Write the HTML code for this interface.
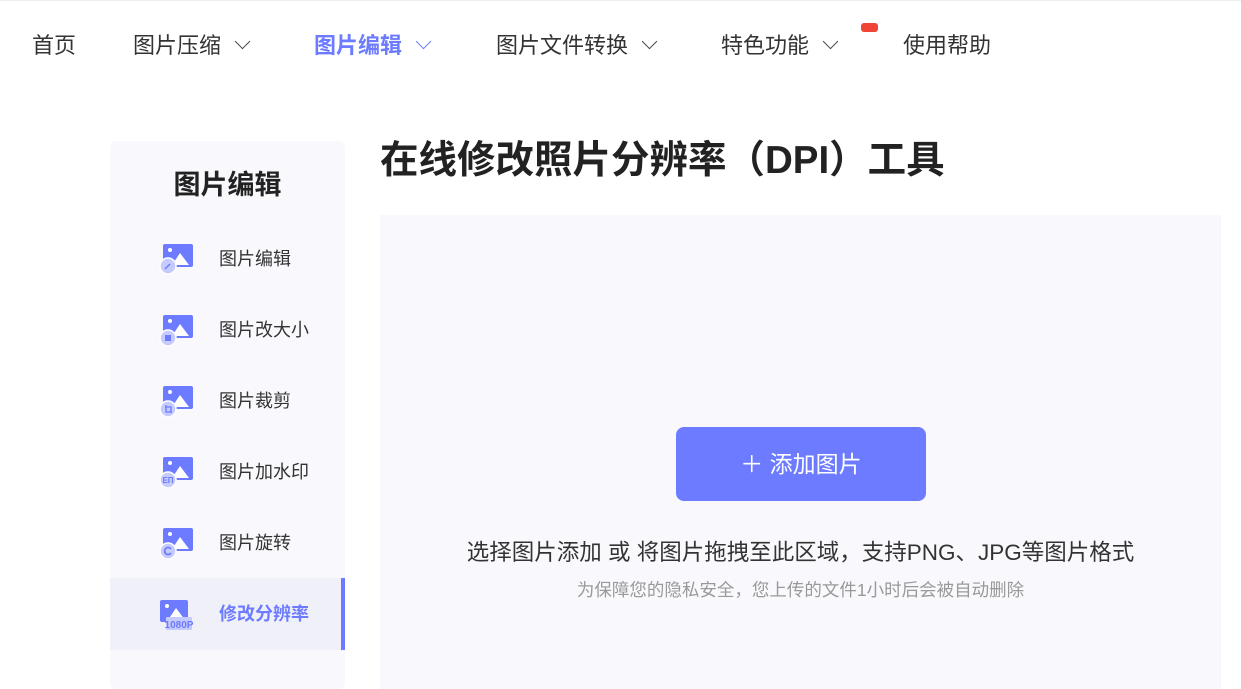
<!DOCTYPE html>
<html><head><meta charset="utf-8"><style>
*{margin:0;padding:0;box-sizing:border-box}
body{width:1241px;height:688px;overflow:hidden;background:#fff;font-family:"Liberation Sans","Noto Sans CJK SC",sans-serif;color:#333;position:relative;border-top:1px solid #eee}
.nav{position:absolute;top:30px;font-size:22px;color:#333;line-height:30px}
.nav .ch{display:inline-block;width:11px;height:11px;border-right:1.5px solid #444;border-bottom:1.5px solid #444;transform:rotate(45deg);margin-left:16px;position:relative;top:-6px}
.act{color:#6c7bff;font-weight:bold}.act .ch{border-color:#6c7bff}
.side{position:absolute;left:110px;top:140px;width:235px;height:548px;background:#f9f9fd;border-radius:6px}
.side h2{position:absolute;top:22px;width:100%;text-align:center;font-size:27px;font-weight:bold;color:#222}
.item{position:absolute;left:0;width:235px;height:72px}
.item span{position:absolute;left:109px;top:22px;font-size:18px;color:#333}
.item svg{position:absolute;left:48px;top:16px}
.item.on{background:#f0f1f8;border-right:4px solid #6c7bff}
.item.on span{color:#6c7bff;font-weight:bold}
.main{position:absolute;left:380px;top:214px;width:841px;height:474px;background:#f9f9fd}
h1{position:absolute;left:380px;top:128px;font-size:38.5px;font-weight:bold;color:#222}
.btn{position:absolute;left:296px;top:212px;width:250px;height:74px;background:#6c7bff;border-radius:8px;color:#fff;font-size:23px;text-align:center;line-height:74px}
.t1{position:absolute;left:0;width:100%;top:320px;text-align:center;font-size:22.5px;color:#333;white-space:nowrap}
.t2{position:absolute;left:0;width:100%;top:362px;text-align:center;font-size:17.5px;color:#999;white-space:nowrap}
</style></head><body>
<div class="nav" style="left:32px">首页</div>
<div class="nav" style="left:133px">图片压缩<i class="ch"></i></div>
<div class="nav act" style="left:314px">图片编辑<i class="ch"></i></div>
<div class="nav" style="left:496px">图片文件转换<i class="ch"></i></div>
<div class="nav" style="left:721px">特色功能<i class="ch"></i></div>
<div style="position:absolute;left:861px;top:22px;width:17px;height:9px;background:#f04438;border-radius:3px"></div>
<div class="nav" style="left:903px">使用帮助</div>
<h1>在线修改照片分辨率（DPI）工具</h1>
<div class="side"><h2>图片编辑</h2>
<div class="item" style="top:82px"><svg width="40" height="40"><rect x="5" y="5" width="30" height="23" rx="2" fill="#6c7bff"/><path d="M14 26l8-12 9 12z" fill="#fff"/><circle cx="12" cy="11" r="2" fill="#fff"/><circle cx="10" cy="27" r="8" fill="#c5cbff" stroke="#fff" stroke-width="1.5"/><path d="M7 30l5-5" stroke="#6c7bff" stroke-width="1.5"/></svg><span>图片编辑</span></div>
<div class="item" style="top:153px"><svg width="40" height="40"><rect x="5" y="5" width="30" height="23" rx="2" fill="#6c7bff"/><path d="M14 26l8-12 9 12z" fill="#fff"/><circle cx="12" cy="11" r="2" fill="#fff"/><circle cx="10" cy="28" r="8" fill="#c5cbff" stroke="#fff" stroke-width="1.5"/><rect x="7" y="25" width="6" height="6" fill="#6c7bff"/></svg><span>图片改大小</span></div>
<div class="item" style="top:224px"><svg width="40" height="40"><rect x="5" y="5" width="30" height="23" rx="2" fill="#6c7bff"/><path d="M14 26l8-12 9 12z" fill="#fff"/><circle cx="12" cy="11" r="2" fill="#fff"/><circle cx="10" cy="28" r="8" fill="#c5cbff" stroke="#fff" stroke-width="1.5"/><path d="M8 24v7h6M7 26h6v6" stroke="#6c7bff" fill="none" stroke-width="1.3"/></svg><span>图片裁剪</span></div>
<div class="item" style="top:295px"><svg width="40" height="40"><rect x="5" y="5" width="30" height="23" rx="2" fill="#6c7bff"/><path d="M14 26l8-12 9 12z" fill="#fff"/><circle cx="12" cy="11" r="2" fill="#fff"/><circle cx="10" cy="28" r="8" fill="#c5cbff" stroke="#fff" stroke-width="1.5"/><text x="10" y="31" font-size="8" text-anchor="middle" fill="#6c7bff" font-family="Liberation Sans" font-weight="bold">EΠ</text></svg><span>图片加水印</span></div>
<div class="item" style="top:366px"><svg width="40" height="40"><rect x="5" y="5" width="30" height="23" rx="2" fill="#6c7bff"/><path d="M14 26l8-12 9 12z" fill="#fff"/><circle cx="12" cy="11" r="2" fill="#fff"/><circle cx="10" cy="28" r="8" fill="#c5cbff" stroke="#fff" stroke-width="1.5"/><path d="M13 26a3.5 3.5 0 1 0 0 4" stroke="#6c7bff" fill="none" stroke-width="1.8"/></svg><span>图片旋转</span></div>
<div class="item on" style="top:437px"><svg width="40" height="40"><rect x="2" y="6" width="28" height="22" rx="2" fill="#6c7bff"/><path d="M10 26l8-12 9 12z" fill="#fff"/><circle cx="9" cy="12" r="2" fill="#fff"/><rect x="8" y="23" width="26" height="13" rx="1" fill="#c5cbff"/><text x="21" y="34" font-size="10" text-anchor="middle" fill="#6c7bff" font-family="Liberation Sans" font-weight="bold">1080P</text></svg><span>修改分辨率</span></div>
</div>
<div class="main">
<div class="btn">＋ 添加图片</div>
<div class="t1">选择图片添加 或 将图片拖拽至此区域，支持PNG、JPG等图片格式</div>
<div class="t2">为保障您的隐私安全，您上传的文件1小时后会被自动删除</div>
</div>
</body></html>
